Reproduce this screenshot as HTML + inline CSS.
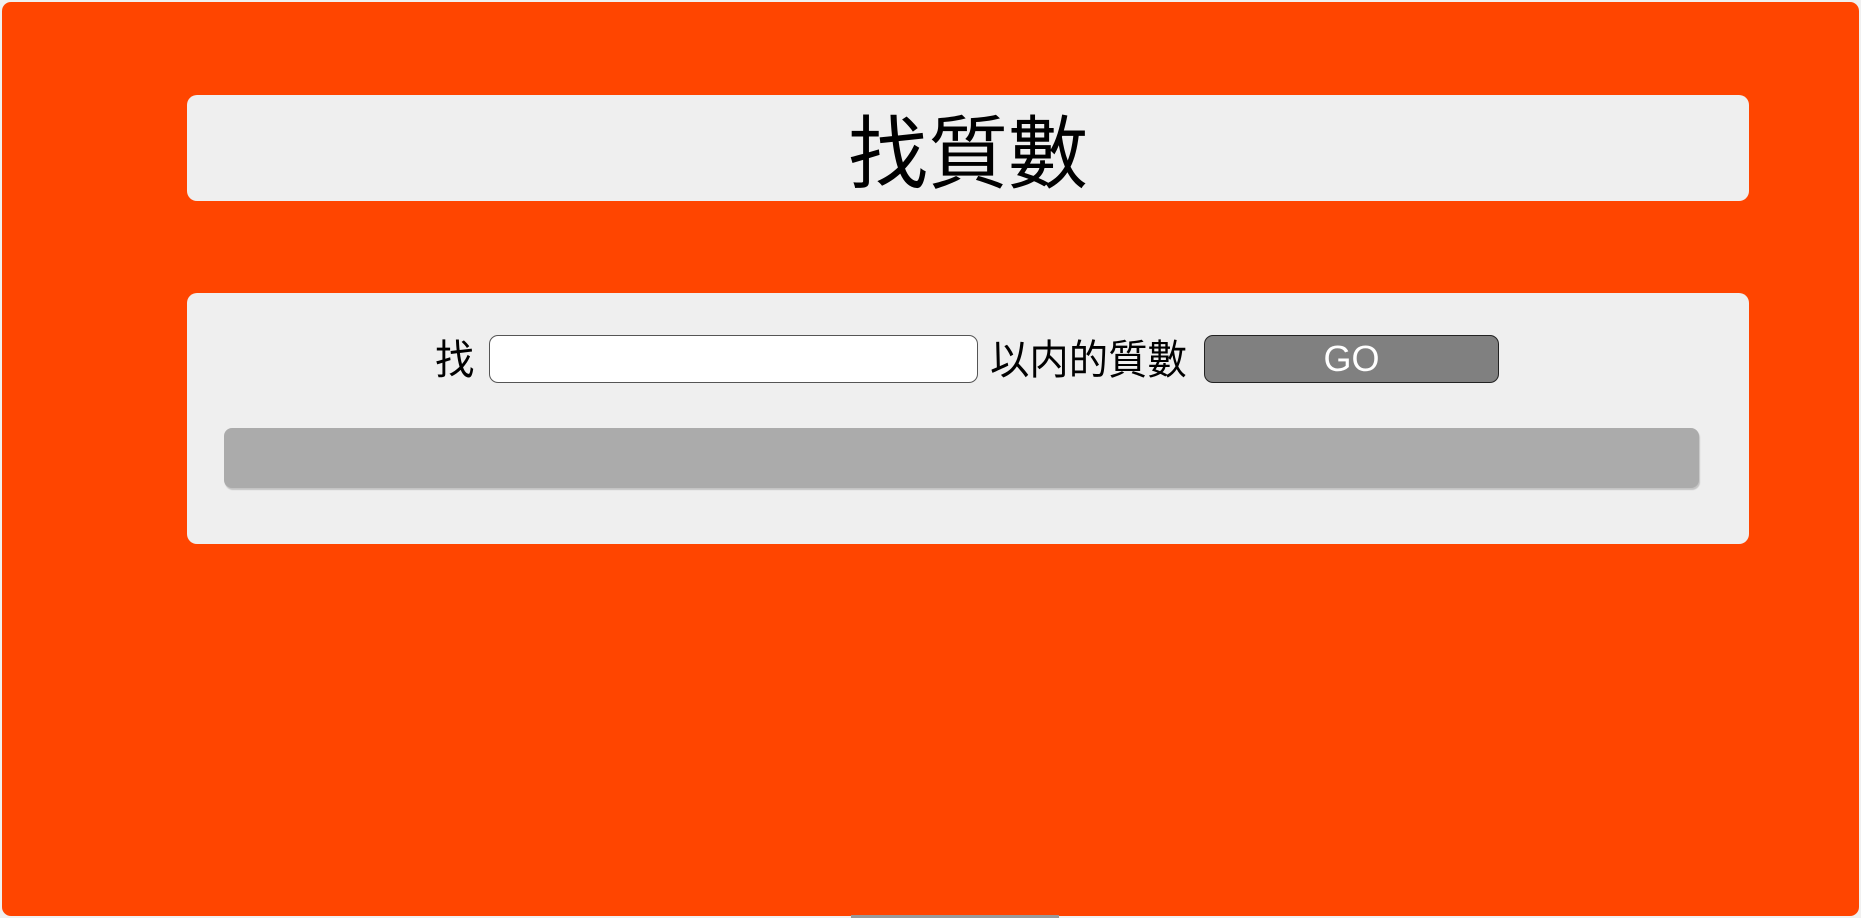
<!DOCTYPE html>
<html><head><meta charset="utf-8"><style>
html,body{margin:0;padding:0;width:1861px;height:918px;overflow:hidden;background:#f0f0f0;}
*{box-sizing:border-box;}
body{font-family:"Liberation Sans","WenQuanYi Zen Hei","Noto Sans CJK TC",sans-serif;}
.bg{position:absolute;left:2px;top:2px;width:1857px;height:914px;background:#ff4500;border-radius:9px;}
.card{position:absolute;left:187px;width:1562px;background:#efefef;border-radius:10px;}
.title{top:95px;height:106px;text-align:center;font-size:80px;line-height:106px;padding-top:7px;color:#000;}
.main{top:293px;height:251px;}
.lbl{position:absolute;top:335px;height:48px;line-height:50px;font-size:41px;color:#000;transform:scaleX(0.96);transform-origin:left;}
.inp{position:absolute;left:489px;top:335px;width:489px;height:48px;background:#fff;border:1.5px solid #555;border-radius:9px;}
.go{position:absolute;left:1204px;top:335px;width:295px;height:48px;background:#808080;border:1.5px solid #222;border-radius:9px;color:#fff;font-size:36px;line-height:45px;text-align:center;}
.bar{position:absolute;left:224px;top:428px;width:1475px;height:60px;background:#ababab;border-radius:8px;box-shadow:1px 2px 1px #c4c4c4;}
.sb{position:absolute;left:851px;top:915px;width:208px;height:3px;background:#999;}
</style></head><body>
<div class="bg"></div>
<div class="card title">找質數</div>
<div class="card main"></div>
<div class="lbl" style="left:435px">找</div>
<div class="inp"></div>
<div class="lbl" style="left:990px">以内的質數</div>
<div class="go">GO</div>
<div class="bar"></div>
<div class="sb"></div>
</body></html>
